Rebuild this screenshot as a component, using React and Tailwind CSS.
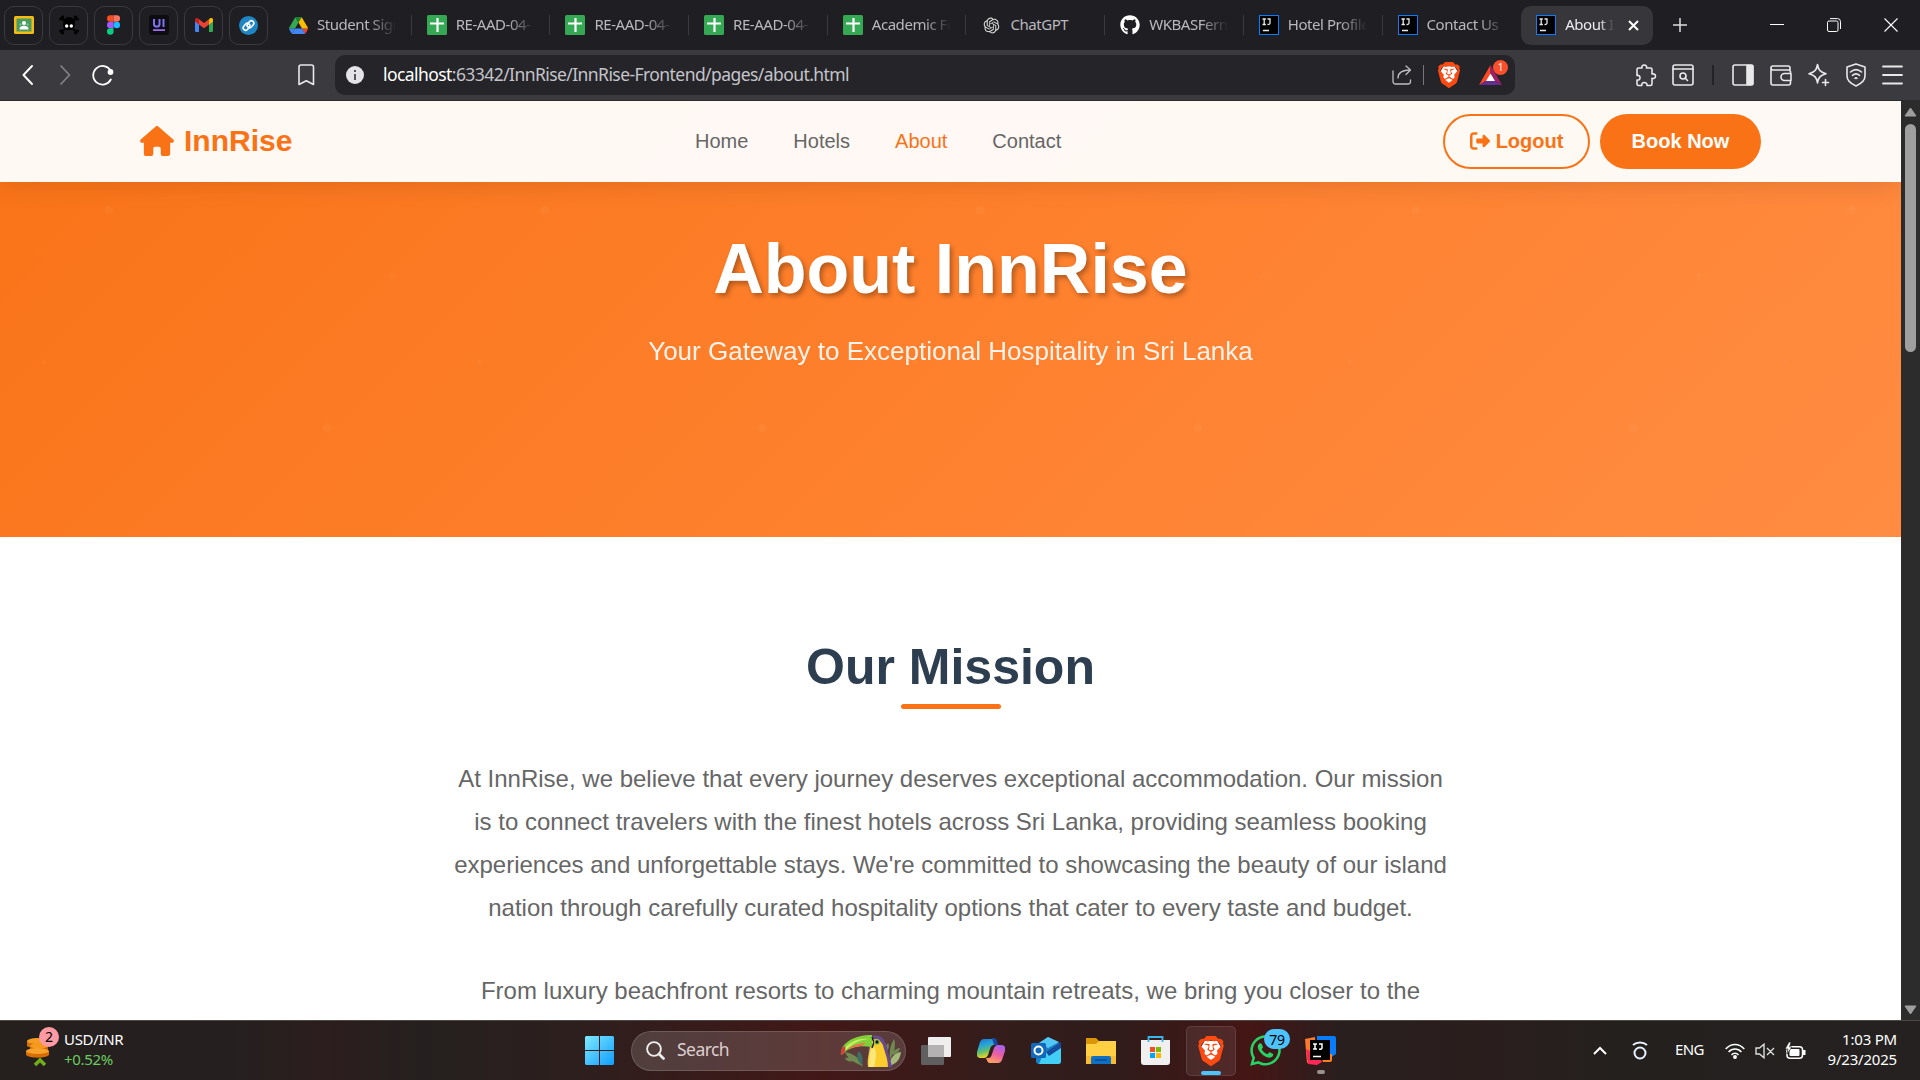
import React from "react";
import { FaHouse, FaRightFromBracket, FaGithub, FaWhatsapp } from "react-icons/fa6";
import { SiBrave } from "react-icons/si";
import { RiOpenaiFill } from "react-icons/ri";

/* ---------- favicons ---------- */
const Classroom = () => (
  <svg width="20" height="18" viewBox="0 0 20 18">
    <rect width="20" height="18" rx="1.5" fill="#f5ba14" />
    <rect x="2.5" y="2.5" width="15" height="13" fill="#4a9c63" />
    <circle cx="10" cy="7" r="2" fill="#fff" />
    <path d="M5.5 13.5c0-3 2.500-3.700 4.500-3.700s4.500.7 4.500 3.700z" fill="#fff" />
    <circle cx="6.500" cy="8.500" r="1" fill="#8ec5a0" />
    <circle cx="13.500" cy="8.500" r="1" fill="#8ec5a0" />
  </svg>
);
const Skull = () => (
  <svg width="20" height="20" viewBox="0 0 20 20">
    <g stroke="#000" strokeWidth="2.200" strokeLinecap="round">
      <path d="M2.500 3l15 14M17.500 3l-15 14" />
    </g>
    <g fill="#000">
      <circle cx="1.700" cy="4" r="1.600" /><circle cx="3.500" cy="2" r="1.600" />
      <circle cx="18.300" cy="4" r="1.600" /><circle cx="16.500" cy="2" r="1.600" />
      <circle cx="1.700" cy="16" r="1.600" /><circle cx="3.500" cy="18" r="1.600" />
      <circle cx="18.300" cy="16" r="1.600" /><circle cx="16.500" cy="18" r="1.600" />
      <path d="M10 2c3.800 0 5.800 2.500 5.800 5.500 0 2.200 1 3.800-1 5-1 .6-1 2.500-2.300 2.500h-5C6.200 15 6.200 13.100 5.200 12.500c-2-1.200-1-2.800-1-5C4.200 4.500 6.200 2 10 2z" />
    </g>
    <circle cx="7.700" cy="11" r="1.700" fill="#fff" />
    <circle cx="12.300" cy="11" r="1.700" fill="#fff" />
  </svg>
);
const Figma = () => (
  <svg width="13" height="20" viewBox="0 0 12 18">
    <path d="M3 0h3v6H3a3 3 0 010-6z" fill="#f24e1e" />
    <path d="M6 0h3a3 3 0 010 6H6z" fill="#ff7262" />
    <path d="M3 6h3v6H3a3 3 0 010-6z" fill="#a259ff" />
    <circle cx="9" cy="9" r="3" fill="#1abcfe" />
    <path d="M3 12h3v3a3 3 0 11-3-3z" fill="#0acf83" />
  </svg>
);
const UiVerse = () => (
  <svg width="20" height="20" viewBox="0 0 20 20">
    <rect width="20" height="20" rx="3" fill="#0d0d10" />
    <path d="M5 4v5.200c0 3.200 5.500 3.200 5.500 0V4M14.500 4v8" fill="none" stroke="#7f72f5" strokeWidth="2" />
    <path d="M4 15.100h12" stroke="#9b6cf0" strokeWidth="1.800" />
  </svg>
);
const Gmail = () => (
  <svg width="18" height="14" viewBox="0 0 18 14">
    <path d="M0 2v11a1 1 0 001 1h3V5z" fill="#4285f4" />
    <path d="M18 2v11a1 1 0 01-1 1h-3V5z" fill="#34a853" />
    <path d="M14 1.500V6.500L18 3.500V2c0-2-2-2.500-3.200-1.500z" fill="#fbbc04" />
    <path d="M4 1.300l5 3.800 5-3.800v5.200l-5 3.800-5-3.800z" fill="#ea4335" />
    <path d="M0 2v1.500l4 3V1.300L3.200.5C2 -.5 0 0 0 2z" fill="#c5221f" />
  </svg>
);
const LinkBadge = () => (
  <svg width="19" height="19" viewBox="0 0 19 19">
    <circle cx="9.500" cy="9.500" r="9.500" fill="#1f86c4" />
    <g fill="none" stroke="#fff" strokeWidth="1.600" transform="rotate(-50 9.500 9.500)" strokeLinecap="round">
      <rect x="3.400" y="6.400" width="7.600" height="4.800" rx="2.400" />
      <rect x="8" y="7.800" width="7.600" height="4.800" rx="2.400" />
    </g>
  </svg>
);
const Drive = () => (
  <svg width="19" height="17" viewBox="0 0 87.3 78">
    <path d="m6.600 66.850 3.850 6.650c.8 1.400 1.950 2.500 3.300 3.300l13.750-23.800h-27.500c0 1.550.4 3.100 1.200 4.500z" fill="#4285f4" />
    <path d="m43.650 25-13.750-23.800c-1.350.8-2.500 1.900-3.300 3.300l-25.400 44a9.060 9.060 0 0 0-1.200 4.500h27.500z" fill="#34a853" />
    <path d="m73.550 76.800c1.350-.8 2.500-1.900 3.300-3.300l1.600-2.750 7.650-13.250c.8-1.400 1.200-2.950 1.200-4.500h-27.500l5.850 11.500z" fill="#ea4335" />
    <path d="m43.650 25 13.750-23.800c-1.350-.8-2.900-1.200-4.500-1.200h-18.500c-1.600 0-3.150.45-4.500 1.200z" fill="#188038" />
    <path d="m59.800 53h-32.300l-13.750 23.800c1.350.8 2.900 1.200 4.500 1.200h50.800c1.600 0 3.150-.45 4.500-1.200z" fill="#4285f4" />
    <path d="m73.400 26.500-12.700-22c-.8-1.400-1.950-2.500-3.300-3.300l-13.750 23.800 16.150 28h27.450c0-1.550-.4-3.100-1.200-4.500z" fill="#fbbc04" />
  </svg>
);
const Sheets = () => (
  <svg width="20" height="20" viewBox="0 0 20 20">
    <rect width="20" height="20" rx="1.500" fill="#34a853" />
    <path d="M3 8.500h14M10.500 3v14" stroke="#fff" strokeWidth="2.200" />
  </svg>
);
const Idea = () => (
  <svg className="shrink-0" width="20" height="20" viewBox="0 0 20 20">
    <rect x=".5" y=".5" width="19" height="19" fill="#000" stroke="#0a7cff" />
    <path d="M3.500 4h3.400M5.200 4v5.500M3.500 9.500h3.400M8.500 4H11v4c0 1.300-1 1.600-2.500 1.500M4 15.500h6" fill="none" stroke="#e8e8e8" strokeWidth="1.300" />
  </svg>
);
const Brave = ({ size }) => (
  <svg width={size} height={size} viewBox="0 0 24 24">
    <path d="M7 4h10l3 5-2 8-6 5-6-5-2-8z" fill="#fff" />
    <SiBrave size={24} color="#fb4a12" />
  </svg>
);

const pinned = [Classroom, Skull, Figma, UiVerse, Gmail, LinkBadge];
const tabs = [
  [Drive, "Student Sign"],
  [Sheets, "RE-AAD-04-"],
  [Sheets, "RE-AAD-04-"],
  [Sheets, "RE-AAD-04-"],
  [Sheets, "Academic Fe"],
  [() => <RiOpenaiFill size={19} color="#ddd" />, "ChatGPT"],
  [() => <FaGithub size={20} color="#fff" />, "WKBASFern"],
  [Idea, "Hotel Profile"],
  [Idea, "Contact Us"],
];

function TabStrip() {
  return (
    <div className="flex h-[50px] shrink-0 items-center bg-[#1f1e23] pl-1">
      <div className="flex gap-1.5">
        {pinned.map((Icon, i) => (
          <div key={i} className="flex size-[39px] items-center justify-center rounded-[10px] border border-[#3a393f]"><Icon /></div>
        ))}
      </div>
      <div className="ml-[5px] flex">
        {tabs.map(([Icon, label], i) => (
          <div key={i} className={"flex h-5 w-[138.7px] items-center pl-[15px] " + (i < 8 ? "border-r border-[#3a393f]" : "")}>
            <div className="flex w-5 shrink-0 justify-center"><Icon /></div>
            <div className={"-mt-0.5 ml-[9px] w-[79px] whitespace-nowrap text-[15px] leading-5 tracking-[-0.45px] text-[#b9b9bd] " + (label === "ChatGPT" ? "" : "mask-r-from-65%")}>{label}</div>
          </div>
        ))}
      </div>
      <div className="flex h-[39px] w-[132px] items-center rounded-[10px] bg-[#37363b] pl-[15px]">
        <Idea />
        <div className="-mt-0.5 ml-[9px] w-[49px] whitespace-nowrap text-[15px] tracking-[-0.45px] text-[#ececee] mask-r-from-70%">About I</div>
        <svg className="ml-[14px]" width="11" height="11" viewBox="0 0 11 11"><path d="M1 1l9 9M10 1l-9 9" stroke="#fff" strokeWidth="2" /></svg>
      </div>
      <svg className="ml-5" width="14" height="14" viewBox="0 0 14 14"><path d="M7 0v14M0 7h14" stroke="#ddd" strokeWidth="1.500" /></svg>
      <div className="ml-auto flex items-center gap-[43px] pr-[22px]">
        <svg width="14" height="14" viewBox="0 0 14 14"><path d="M0 6.500h14" stroke="#fff" /></svg>
        <svg width="14" height="14" viewBox="0 0 14 14" fill="none" stroke="#fff"><rect x=".5" y="3" width="10.500" height="10.500" rx="1.500" /><path d="M3 .6h7.500a3 3 0 013 3V11" /></svg>
        <svg width="14" height="14" viewBox="0 0 14 14"><path d="M.5.5l13 13M13.500.5l-13 13" stroke="#fff" strokeWidth="1.100" /></svg>
      </div>
    </div>
  );
}

const line = { fill: "none", stroke: "#e9e9ec", strokeWidth: 1.6, strokeLinecap: "round", strokeLinejoin: "round" };

function Toolbar() {
  return (
    <div className="flex h-[51px] shrink-0 items-center border-b border-[#2b2a2e] bg-[#3b3a3f] pl-[22px]">
      <svg width="11" height="20" viewBox="0 0 11 20" {...line} strokeWidth="1.900" stroke="#fff"><path d="M10 1L1.500 10 10 19" /></svg>
      <svg className="ml-[27px]" width="11" height="20" viewBox="0 0 11 20" {...line} strokeWidth="1.700" stroke="#838288"><path d="M1 1l8.500 9L1 19" /></svg>
      <svg className="ml-[21px]" width="22" height="22" viewBox="0 0 22 22" {...line} strokeWidth="1.800" stroke="#fff">
        <path d="M18.800 15.500A9.300 9.300 0 1118.500 6.500" /><circle cx="18.500" cy="8" r="2" fill="#fff" />
      </svg>
      <svg className="ml-[184px]" width="17" height="22" viewBox="0 0 17 22" {...line}><path d="M1 3a2 2 0 012-2h10.500a2 2 0 012 2v17.500L8.300 16.800 1 20.500z" /></svg>
      <div className="ml-[20px] flex h-10 w-[1180px] items-center rounded-[10px] bg-[#252429] pl-[11px]">
        <div className="flex size-[18px] items-center justify-center rounded-full bg-[#e3e3e8]">
          <svg width="4" height="10" viewBox="0 0 4 10"><path d="M2 0v2M2 4v6" stroke="#55545a" strokeWidth="2" /></svg>
        </div>
        <div className="-mt-0.5 ml-[19px] w-[899px] whitespace-nowrap text-[17.5px] tracking-[-0.57px] text-[#c4c4c9]"><span className="text-white">localhost</span>:63342/InnRise/InnRise-Frontend/pages/about.html</div>
        <svg className="ml-[110px]" width="20" height="20" viewBox="0 0 20 20" {...line} strokeWidth="1.300" stroke="#bdbdc2"><path d="M1 6v10.500A2.500 2.500 0 003.500 19h12.500a2.500 2.500 0 002.500-2.500V15M6 13c0-5 3-8 12.500-8M14 1l4.500 4L14 9.500" /></svg>
        <div className="ml-[11px] h-5 w-px bg-[#77767c]" />
        <div className="ml-[12px]"><Brave size={26} /></div>
        <div className="relative ml-[17px]">
          <svg width="23" height="20" viewBox="0 0 23 20"><path d="M11.500 0L0 20l11.500-7z" fill="#ff4724" /><path d="M0 20h23l-11.500-7z" fill="#662d91" /><path d="M11.500 0L23 20l-11.500-7z" fill="#9e1f63" /><path d="M11.500 8.500L7 16h9z" fill="#fff" /></svg>
          <div className="absolute -top-[5px] left-[14px] flex size-[15px] items-center justify-center rounded-full bg-[#fc4f2c] text-[10px] text-white">1</div>
        </div>
      </div>
      <div className="ml-auto flex items-center pr-[17px]">
        <svg width="22" height="23" viewBox="0 0 22 23" {...line}><path d="M2 5.500a1.500 1.500 0 011.500-1.500H7c-.5-2 .6-3 2.200-3s2.800 1 2.300 3h4a1.500 1.500 0 011.500 1.500V10c2-.5 3.500.5 3.500 2.200s-1.500 2.600-3.500 2.200v5.600a1.500 1.500 0 01-1.500 1.500H12c.3-2-1-3-2.700-3s-2.800 1-2.500 3H3.500A1.500 1.500 0 012 20v-4c2 .3 3-.8 3-2.300s-1-2.600-3-2.200z" /></svg>
        <svg className="ml-[15px]" width="22" height="22" viewBox="0 0 22 22" {...line}><rect x="1" y="1" width="20" height="20" rx="2" /><path d="M1 5h20" /><circle cx="11" cy="12" r="3" /><path d="M13 14l2.500 2.500" /></svg>
        <div className="ml-[18px] h-5 w-[2px] bg-[#242328]" />
        <svg className="ml-[18px]" width="22" height="22" viewBox="0 0 22 22" {...line}><rect x="1" y="1" width="20" height="20" rx="2" /><path d="M15 1.500h5.500v19H15z" fill="#e9e9ec" /></svg>
        <svg className="ml-[16px]" width="22" height="22" viewBox="0 0 22 22" {...line}><path d="M20 5.500V4a2 2 0 00-2-2H3a2 2 0 000 4h15.500a2 2 0 012 2v1.500M1 4v15a2 2 0 002 2h15.500a2 2 0 002-2v-1.500M21 9.500h-6.500a3.500 3.500 0 000 7H21z" /></svg>
        <svg className="ml-[16px]" width="22" height="24" viewBox="0 0 22 24" {...line}><path d="M9.500 1.500c1 5.500 2.500 7.500 8.500 9.200-6 1.700-7.500 3.700-8.500 9.200-1-5.500-2.500-7.500-8.500-9.200 6-1.700 7.500-3.700 8.500-9.200zM17.500 16.500v6M14.500 19.500h6" /></svg>
        <svg className="ml-[16px]" width="20" height="24" viewBox="0 0 20 24" {...line}><path d="M10 1l9 3v9c0 4.500-3.500 7.500-9 10-5.500-2.500-9-5.500-9-10V4z" /><path d="M4.500 9c3.500-3 7.500-3 11 0M6.500 12.300c2.200-1.800 4.800-1.800 7 0M9 15.300c.7-.6 1.300-.6 2 0" /></svg>
        <svg className="ml-[16px]" width="21" height="20" viewBox="0 0 21 20" {...line} strokeWidth="1.800"><path d="M1 1.500h19M1 10h19M1 18.500h19" /></svg>
      </div>
    </div>
  );
}

function Page() {
  return (
    <main className="min-w-0 flex-1 overflow-hidden bg-white font-['Liberation_Sans',Arial,sans-serif]">
      <div className="relative h-[436px] bg-linear-135 from-[#f97316] via-[#fe802c] to-[#ff8c42]">
        <svg className="absolute inset-0 size-full" aria-hidden="true">
          <defs>
            <pattern id="grain" width="435.6" height="435.6" patternUnits="userSpaceOnUse">
              <g fill="#fff">
                <circle cx="109" cy="109" r="4.350" opacity=".035" />
                <circle cx="326.700" cy="326.700" r="4.350" opacity=".035" />
                <circle cx="392" cy="174" r="2.200" opacity=".03" />
                <circle cx="43.600" cy="261" r="2.200" opacity=".03" />
              </g>
            </pattern>
          </defs>
          <rect width="100%" height="100%" fill="url(#grain)" />
        </svg>
        <nav className="relative flex h-[81px] items-center bg-white/95 px-[140px] shadow-[0_2px_25px_rgba(0,0,0,0.12)]">
          <div className="flex w-[555px] items-center gap-2.5 text-[30px] font-bold text-[#f97316]"><FaHouse className="-mt-0.5 h-[30px] w-[34px]" /><span className="-mt-[3px]">InnRise</span></div>
          <div className="-mt-0.5 flex gap-[45px] text-[20px] text-[#666]">
            <span>Home</span><span>Hotels</span><span className="text-[#f97316]">About</span><span>Contact</span>
          </div>
          <div className="ml-auto flex gap-2.5 text-[20px] font-bold">
            <button className="flex h-[55px] w-[147px] items-center justify-center gap-[6px] rounded-full border-2 border-[#f97316] pb-0.5 text-[#f97316]"><FaRightFromBracket size={20} />Logout</button>
            <button className="h-[55px] w-[161px] rounded-full bg-[#f97316] pb-0.5 text-white">Book Now</button>
          </div>
        </nav>
        <header className="relative pt-[45px] text-center text-white">
          <h1 className="text-[70px] leading-[84px] font-bold [text-shadow:2.500px_2.500px_5px_rgba(0,0,0,0.3)]">About InnRise</h1>
          <p className="mt-[20px] text-[26px] leading-[40px] opacity-90">Your Gateway to Exceptional Hospitality in Sri Lanka</p>
        </header>
      </div>
      <section className="mx-auto w-[1000px] pt-[100px] text-center text-[24px] leading-[43.2px] text-[#666]">
        <h2 className="text-[50px] leading-[60px] font-bold text-[#2c3e50]">Our Mission</h2>
        <div className="mx-auto mt-[7px] h-[5px] w-[100px] rounded-[2.500px] bg-[#f97316]" />
        <p className="mt-[47.5px] whitespace-nowrap">At InnRise, we believe that every journey deserves exceptional accommodation. Our mission<br />is to connect travelers with the finest hotels across Sri Lanka, providing seamless booking<br />experiences and unforgettable stays. We're committed to showcasing the beauty of our island<br />nation through carefully curated hospitality options that cater to every taste and budget.</p>
        <p className="mt-[40px] whitespace-nowrap">From luxury beachfront resorts to charming mountain retreats, we bring you closer to the</p>
      </section>
    </main>
  );
}

function Scrollbar() {
  return (
    <div className="flex w-[19px] shrink-0 flex-col items-center bg-[#2c2c2c]">
      <svg className="mt-[6px]" width="13" height="10" viewBox="0 0 13 10"><path d="M6.500 1L12 9H1z" fill="#9f9f9f" stroke="#9f9f9f" strokeLinejoin="round" /></svg>
      <div className="mt-[7px] h-[228px] w-[11px] rounded-full bg-[#9f9f9f]" />
      <svg className="mt-auto mb-[5px]" width="13" height="10" viewBox="0 0 13 10"><path d="M6.500 9L12 1H1z" fill="#9f9f9f" stroke="#9f9f9f" strokeLinejoin="round" /></svg>
    </div>
  );
}

const Toucan = () => (
  <svg width="61" height="32" viewBox="0 0 61 32">
    <g fill="#71894f">
      <path d="M50 24c-1-9 1-15 4-20 2 5 1 13-4 20zM45 18c0-5 1-8 3-10 2 4 0 8-3 10zM51 20c3-5 6-7 9-7-1 4-4 7-9 7z" />
      <path d="M49 31c1-8 5-13 12-14-1 8-5 12-12 14z" fill="#a7b97a" />
      <path d="M23 31C17 29 8 25 5 17c6 1 15 5 18 14zM14 26c-5 1-8 0-9-3 4-1 7 0 9 3z" />
      <path d="M22 30c-6-5-6-10-3-14 4 4 4 9 3 14z" fill="#3d6c62" />
    </g>
    <path d="M32 1c8-3 13 3 15 11 1 8 4 13 5 20H29c-1-8-1-15 0-22z" fill="#68498b" />
    <path d="M33 4c8 0 10 5 11 10 2 6 4 12 4 18H28c-1-8 1-13 2-20z" fill="#f8cd2c" />
    <path d="M34 12c3 4 2 13 0 20h-5c0-8 1-14 2-18z" fill="#fae77b" />
    <path d="M1 20C0 8 14 0 32 0v12C20 10 9 12 3 19z" fill="#81d038" />
    <path d="M4 14C10 6 20 3 29 4 19 5 12 9 6 15z" fill="#c5ef66" />
    <path d="M7 15c5-5 12-7 19-7-5 5-13 3-19 7z" fill="#ef704b" />
    <path d="M1 20c-1-4 1-8 4-9 1 4 0 7-4 9z" fill="#d83c3c" />
    <path d="M32 2l2 5-2 6" fill="none" stroke="#242026" strokeWidth="1.500" />
    <circle cx="37" cy="7" r="3" fill="#9bc950" /><circle cx="37" cy="7" r="1.700" fill="#171717" />
  </svg>
);

function Taskbar() {
  return (
    <div className="flex h-[60px] shrink-0 items-center border-t border-[#4b4846] bg-[linear-gradient(90deg,#25201e_0%,#25201f_12%,#2c1d1e_17%,#25201f_22%,#2d1f1e_30%,#421817_43%,#341d1b_52%,#2f1c1b_58%,#451615_65%,#281f1e_70%,#2a1e1d_77%,#24201e_84%,#242120_100%)] text-white">
        <div className="flex w-[585px] items-center pl-[26px]">
          <div className="relative -mt-[6px] h-[42px] w-[38px]">
            <svg className="mt-[10px]" width="24" height="30" viewBox="0 0 24 30">
              <path d="M1 4v5c3 3 17 3 20 0V4z" fill="#d17208" /><ellipse cx="11" cy="4" rx="10" ry="3" fill="#f59d22" />
              <path d="M4 9v5c3 3 15 3 18 0V9z" fill="#c96406" /><ellipse cx="13" cy="9" rx="9" ry="2.500" fill="#f59a1d" />
              <path d="M0 14v4c3 3.500 20 3.500 23 0v-4z" fill="#d76e05" /><ellipse cx="11.500" cy="14" rx="11.500" ry="3" fill="#f8a12b" />
              <path d="M9 28l5-5 5 5" fill="none" stroke="#70ad17" strokeWidth="3.500" />
            </svg>
            <div className="absolute top-0 left-[13px] flex size-5 items-center justify-center rounded-full bg-[#ff99a4] text-[14px] text-black">2</div>
          </div>
          <div className="-mt-1 text-[15px] leading-5 tracking-[-0.32px]">USD/INR<div className="text-[#6ccb5f]">+0.52%</div></div>
        </div>
        <svg width="29" height="29" viewBox="0 0 29 29">
          <defs><linearGradient id="win" x1="0" y1="0" x2="1" y2="1"><stop stopColor="#7eeaff" /><stop offset="1" stopColor="#109cff" /></linearGradient></defs>
          <path d="M1 0h13v14H0V1zM15 0h13l1 1v13H15zM0 15h14v14H1l-1-1zM15 15h14v13l-1 1H15z" fill="url(#win)" />
        </svg>
        <div className="ml-[17px] flex h-10 w-[275px] items-center rounded-full border border-white/15 bg-white/15 pl-[14px]">
          <svg width="19" height="19" viewBox="0 0 19 19" fill="none" stroke="#eee"><circle cx="8" cy="8" r="6.900" strokeWidth="1.900" /><path d="M13 13l4.500 4.500" strokeWidth="2.700" strokeLinecap="round" /></svg>
          <div className="-mt-0.5 ml-[12px] text-[17.5px] tracking-[-0.55px] text-[#dccfcf]">Search</div>
          <div className="mr-[4px] ml-auto"><Toucan /></div>
        </div>
        <svg className="ml-[15px]" width="30" height="28" viewBox="0 0 30 28"><rect y="8" width="23" height="20" rx="1" fill="#5f5f5f" /><rect x="7" width="23" height="20" rx="1" fill="#eee" /><path d="M7 8h16v12H7z" fill="#b4b2b2" /></svg>
        <svg className="ml-[26px]" width="28" height="26" viewBox="0 0 28 26">
          <defs>
            <linearGradient id="cp1" x1="0" y1="0" x2=".3" y2="1"><stop stopColor="#1974d2" /><stop offset=".4" stopColor="#28a6d8" /><stop offset=".7" stopColor="#64bf68" /><stop offset="1" stopColor="#f1d22b" /></linearGradient>
            <linearGradient id="cp2" x1=".7" y1="0" x2=".3" y2="1"><stop stopColor="#a95ff0" /><stop offset=".5" stopColor="#ec5fa0" /><stop offset="1" stopColor="#ffa45c" /></linearGradient>
          </defs>
          <path d="M7 1h8c3 0 4 2 5 6h-3c-2 0-3 1-4 4l-2 6c-1 2-2 3-4 3H4c-4 0-5-3-4-6L3 4c1-2 2-3 4-3z" fill="url(#cp1)" />
          <path d="M15 0h2c2 0 3 2 4 7h-4z" fill="#1748a8" />
          <path d="M21 25h-8c-2 0-3-2-4-5h2c2 0 3-1 4-4l2-6c1-2 2-3 4-3h3c4 0 5 3 4 6l-3 9c-1 2-2 3-4 3z" fill="url(#cp2)" />
        </svg>
        <svg className="ml-[26px]" width="30" height="27" viewBox="0 0 30 27">
          <path d="M5 8L17 0l13 7v17a3 3 0 01-3 3H8a3 3 0 01-3-3z" fill="#197fc4" /><path d="M17 0l-9 6 9 5L28 5z" fill="#52c6f5" /><path d="M12 17l18-10v17a3 3 0 01-3 3H8z" fill="#42cef5" /><path d="M15 15l15-10v6L18 19z" fill="#164c9e" />
          <rect y="6" width="15" height="15" rx="1.500" fill="#1169bd" /><circle cx="7.500" cy="13.500" r="4" fill="none" stroke="#fff" strokeWidth="2" />
        </svg>
        <svg className="ml-[25px]" width="30" height="27" viewBox="0 0 30 27"><path d="M0 1h10l4 4v7H0z" fill="#d89608" /><path d="M0 7h10l3-3h17v23H0z" fill="#ffd044" /><path d="M0 19h30v8H0z" fill="#f9bc2e" /><path d="M5 27v-6a2 2 0 012-2h16a2 2 0 012 2v6z" fill="#0f70c4" /><path d="M9 23h12" stroke="#0b4d8f" strokeWidth="1.500" /></svg>
        <svg className="ml-[25px]" width="29" height="29" viewBox="0 0 29 29"><path d="M0 4h29v22a3 3 0 01-3 3H3a3 3 0 01-3-3z" fill="#f0f0f0" /><path d="M7.500 6V1h14v5" fill="none" stroke="#36b8ed" strokeWidth="1.800" /><path d="M9 11h5v5H9z" fill="#f25022" /><path d="M15 11h5v5h-5z" fill="#7fba00" /><path d="M9 17h5v5H9z" fill="#00a4ef" /><path d="M15 17h5v5h-5z" fill="#ffb900" /></svg>
        <div className="ml-[16px] flex h-[50px] w-[50px] flex-col items-center rounded-[5px] border border-white/10 bg-white/8 pt-[9px]">
          <Brave size={30} />
          <div className="mt-[5px] h-[4px] w-5 shrink-0 rounded-full bg-[#4cc2ff]" />
        </div>
        <div className="relative ml-[12px]">
          <FaWhatsapp size={35} color="#25d366" />
          <div className="absolute -top-[4px] left-[16px] flex h-5 w-[26px] items-center justify-center rounded-full bg-[#4cc2ff] text-[14px] tracking-tight text-black">79</div>
        </div>
        <div className="ml-[22px] flex h-[50px] flex-col items-center pt-[9px]">
          <svg width="31" height="30" viewBox="0 0 31 30"><path d="M0 4l10-2v24l-8 2z" fill="#ff7a2e" /><path d="M12 1h17a2 2 0 012 2v16l-6 4H12z" fill="#087cfa" /><path d="M1 14l12 6 4 7-5 3-9-1z" fill="#fe2857" /><path d="M18 27h7a2 2 0 002-2v-6H15z" fill="#fc801d" /><path d="M5 5h20v20H5z" /><path d="M8 9h4M10 9v5M8 14h4M14 9h3v4q0 1.500-3 1.200M8 21.500h8" fill="none" stroke="#fff" strokeWidth="1.500" /></svg>
          <div className="mt-[5px] h-[4px] w-2 rounded-full bg-[#9b9090]" />
        </div>
        <div className="ml-auto flex items-center pr-[23px]">
          <svg width="14" height="9" viewBox="0 0 14 9"><path d="M1 8l6-6 6 6" fill="none" stroke="#fff" strokeWidth="2" /></svg>
          <svg className="ml-[25px]" width="16" height="19" viewBox="0 0 16 19" fill="none" stroke="#eaf2ff"><circle cx="8" cy="12" r="5.500" strokeWidth="2" /><path d="M1 4c4-3.500 10-3.500 14 0" strokeWidth="2" /></svg>
          <div className="-mt-0.5 ml-[27px] w-[29px] text-[15px] tracking-[-0.6px]">ENG</div>
          <svg className="ml-[21px]" width="20" height="16" viewBox="0 0 20 16" fill="none" stroke="#fff" strokeWidth="1.500"><path d="M.7 6C6 0 14 0 19.300 6M3.600 9c3.500-4 9.300-4 12.800 0M6.500 12c2-2.300 5-2.300 7 0" /><circle cx="10" cy="14" r="1.200" fill="#fff" /></svg>
          <svg className="ml-[10px]" width="20" height="16" viewBox="0 0 20 16" fill="none" stroke="#ddd" strokeWidth="1.400"><path d="M1 5h3.500L9 1.200v13.600L4.500 11H1zM12 5l7 7M19 5l-7 7" /></svg>
          <svg className="ml-[10px]" width="21" height="18" viewBox="0 0 21 18"><rect x="2" y="4.700" width="15.500" height="11.500" rx="3" fill="none" stroke="#fff" strokeWidth="1.500" /><rect x="4.500" y="7" width="10" height="7" rx="1" fill="#fff" /><path d="M19 8v5" stroke="#fff" strokeWidth="3" /><path d="M4 0L0 7h3l-1 5 5-7H4.500L6 0z" fill="#fff" stroke="#25211f" strokeWidth=".7" /></svg>
          <div className="-mt-1 ml-[21px] w-[70px] whitespace-nowrap text-right text-[15px] leading-5 tracking-[-0.2px]">1:03 PM<br />9/23/2025</div>
        </div>
    </div>
  );
}

export default function App() {
  return (
    <div className="flex h-[1080px] w-[1920px] flex-col overflow-hidden font-['Noto_Sans','Open_Sans',sans-serif]">
      <TabStrip />
      <Toolbar />
      <div className="flex min-h-0 flex-1"><Page /><Scrollbar /></div>
      <Taskbar />
    </div>
  );
}
